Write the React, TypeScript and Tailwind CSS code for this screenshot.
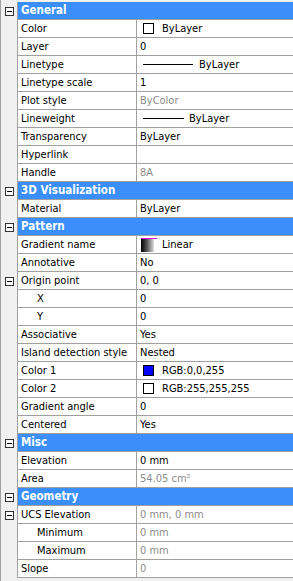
import type { ReactNode } from "react";

type Row =
  | { kind: "head"; label: string }
  | {
      kind: "prop";
      label: string;
      value?: ReactNode;
      gray?: boolean;
      indent?: boolean;
      toggle?: boolean;
    };

const Swatch = ({ fill }: { fill: string }) => (
  <span
    className="inline-block w-[11px] h-[11px] border border-black ml-[3px] mr-[8px] shrink-0"
    style={{ background: fill }}
  />
);

const LineSample = ({ w, gap }: { w: number; gap: number }) => (
  <span
    className="inline-block h-px bg-black ml-[3px] shrink-0"
    style={{ width: w, marginRight: gap }}
  />
);

const GradientSwatch = () => (
  <span className="relative inline-block w-[16px] h-[14px] ml-[1px] mr-[5px] shrink-0">
    <span className="absolute left-0 top-[1px] w-[13px] h-[13px] bg-[linear-gradient(to_right,#000,#555_45%,#ddd)]" />
    <span className="absolute left-0 top-0 w-[16px] h-px bg-[#e000e0]" />
  </span>
);

const rows: Row[] = [
  { kind: "head", label: "General" },
  { kind: "prop", label: "Color", value: <><Swatch fill="#fff" />ByLayer</> },
  { kind: "prop", label: "Layer", value: "0" },
  { kind: "prop", label: "Linetype", value: <><LineSample w={50} gap={6} />ByLayer</> },
  { kind: "prop", label: "Linetype scale", value: "1" },
  { kind: "prop", label: "Plot style", value: "ByColor", gray: true },
  { kind: "prop", label: "Lineweight", value: <><LineSample w={41} gap={5} />ByLayer</> },
  { kind: "prop", label: "Transparency", value: "ByLayer" },
  { kind: "prop", label: "Hyperlink", value: "" },
  { kind: "prop", label: "Handle", value: "8A", gray: true },
  { kind: "head", label: "3D Visualization" },
  { kind: "prop", label: "Material", value: "ByLayer" },
  { kind: "head", label: "Pattern" },
  { kind: "prop", label: "Gradient name", value: <><GradientSwatch />Linear</> },
  { kind: "prop", label: "Annotative", value: "No" },
  { kind: "prop", label: "Origin point", value: "0, 0", toggle: true },
  { kind: "prop", label: "X", value: "0", indent: true },
  { kind: "prop", label: "Y", value: "0", indent: true },
  { kind: "prop", label: "Associative", value: "Yes" },
  { kind: "prop", label: "Island detection style", value: "Nested" },
  { kind: "prop", label: "Color 1", value: <><Swatch fill="#0000ff" />RGB:0,0,255</> },
  { kind: "prop", label: "Color 2", value: <><Swatch fill="#fff" />RGB:255,255,255</> },
  { kind: "prop", label: "Gradient angle", value: "0" },
  { kind: "prop", label: "Centered", value: "Yes" },
  { kind: "head", label: "Misc" },
  { kind: "prop", label: "Elevation", value: "0 mm" },
  { kind: "prop", label: "Area", value: "54.05 cm²", gray: true },
  { kind: "head", label: "Geometry" },
  { kind: "prop", label: "UCS Elevation", value: "0 mm, 0 mm", gray: true, toggle: true },
  { kind: "prop", label: "Minimum", value: "0 mm", gray: true, indent: true },
  { kind: "prop", label: "Maximum", value: "0 mm", gray: true, indent: true },
  { kind: "prop", label: "Slope", value: "0", gray: true },
];

// the little [-] box in the left gutter
const Toggle = () => (
  <span className="relative block w-[9px] h-[9px] border border-[#333] bg-white">
    <span className="absolute left-[1px] top-[3px] w-[5px] h-px bg-black" />
  </span>
);

export default function App() {
  return (
    <div
      className="w-[293px] h-[581px] bg-[#f0f0f0] border-l border-[#a0a0a0] pt-[2px] text-[11px] leading-none text-black overflow-hidden"
      style={{ fontFamily: "'DejaVu Sans Condensed', 'Liberation Sans', sans-serif" }}
    >
      {rows.map((r, i) => (
        <div key={i} className="flex h-[18px]">
          <div className="w-[16px] flex items-center justify-center pl-[1px] shrink-0">
            {(r.kind === "head" || r.toggle) && <Toggle />}
          </div>
          {r.kind === "head" ? (
            <div className="flex-1 flex items-center border-l border-[#a0a0a0] bg-[#3a8ffd] pl-[3px] border-b border-b-[#a0a0a0] font-bold text-white text-[11.5px]">
              {r.label}
            </div>
          ) : (
            <>
              <div
                className={
                  "w-[120px] shrink-0 flex items-center bg-white border-l border-r border-b border-[#a0a0a0] " +
                  (r.indent ? "pl-[19px]" : "pl-[3px]")
                }
              >
                {r.label}
              </div>
              <div
                className={
                  "flex-1 flex items-center bg-white border-b border-[#a0a0a0] pl-[3px] " +
                  (r.gray ? "text-[#8c8c8c]" : "text-black")
                }
              >
                {r.value}
              </div>
            </>
          )}
        </div>
      ))}
    </div>
  );
}
